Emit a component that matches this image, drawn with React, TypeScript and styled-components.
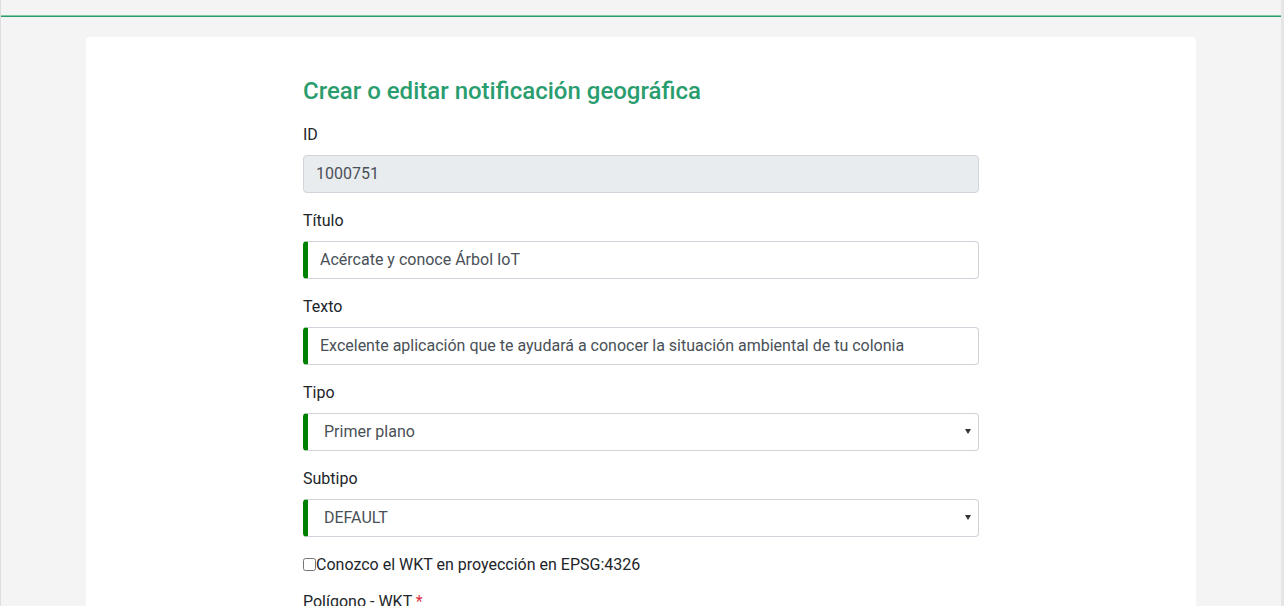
import styled, { createGlobalStyle } from 'styled-components'

const GlobalStyle = createGlobalStyle`
    html, body {
        margin: 0;
        padding: 0;
        overflow: hidden;
        background: #f4f4f4;
    }
    body {
        font-family: Roboto, "Liberation Sans", sans-serif;
        font-size: 16px;
        line-height: 1.5;
        color: #212529;
    }
    * {
        box-sizing: border-box;
    }
`;

const fields = [
    { label: 'ID', value: '1000751', kind: 'disabled' },
    { label: 'Título', value: 'Acércate y conoce Árbol IoT', kind: 'text' },
    { label: 'Texto', value: 'Excelente aplicación que te ayudará a conocer la situación ambiental de tu colonia', kind: 'text' },
    { label: 'Tipo', value: 'Primer plano', kind: 'select' },
    { label: 'Subtipo', value: 'DEFAULT', kind: 'select' },
];

export default function App() {
    return (
        <Page>
            <GlobalStyle />
            <TopBar />
            <Card>
                <Form>
                    <Title>Crear o editar notificación geográfica</Title>
                    {fields.map((f) => (
                        <FormGroup key={f.label}>
                            <Label>{f.label}</Label>
                            {f.kind === 'disabled' && <Input disabled defaultValue={f.value} />}
                            {f.kind === 'text' && <Input $required defaultValue={f.value} />}
                            {f.kind === 'select' && (
                                <SelectWrap>
                                    <Select defaultValue={f.value}>
                                        <option>{f.value}</option>
                                    </Select>
                                </SelectWrap>
                            )}
                        </FormGroup>
                    ))}
                    <CheckRow>
                        <Check type="checkbox" />
                        Conozco el WKT en proyección en EPSG:4326
                    </CheckRow>
                    <Label>
                        Polígono - WKT <Star>*</Star>
                    </Label>
                </Form>
            </Card>
        </Page>
    );
}

const Page = styled.div`
    min-height: 606px;
    border-left: 1px solid #dedede;
    border-right: 3px solid #e6e6e6;
    background: #f4f4f4;
`;

const TopBar = styled.div`
    height: 16px;
    border-bottom: 1px solid #86c7a5;
    box-shadow: 0 1px 0 #2a9d6f;
`;

const Card = styled.div`
    width: 1110px;
    margin: 21px auto 0;
    padding: 40px 0 40px;
    background: #fff;
    border-radius: 4px;
`;

const Form = styled.div`
    width: 676px;
    margin: 0 auto;
`;

const Title = styled.h2`
    margin: 0 0 17px;
    font-size: 24px;
    font-weight: 500;
    line-height: 1.2;
    color: #2a9d6f;
`;

const FormGroup = styled.div`
    margin-bottom: 16px;
`;

const Label = styled.label`
    display: block;
    margin-bottom: 8px;
    font-size: 16px;
    line-height: 24px;
`;

const Input = styled.input<{ $required?: boolean }>`
    display: block;
    width: 100%;
    height: 38px;
    padding: 6px 12px;
    font-family: inherit;
    font-size: 16px;
    line-height: 1.5;
    color: #495057;
    background: #fff;
    border: 1px solid #ced4da;
    border-left: ${(p) => (p.$required ? '5px solid #008000' : '1px solid #ced4da')};
    border-radius: 4px;
    outline: none;

    &:disabled {
        background: #e9ecef;
        color: #495057;
    }
`;

const SelectWrap = styled.div`
    position: relative;

    &::after {
        content: '';
        position: absolute;
        right: 8px;
        top: 16px;
        border-left: 3px solid transparent;
        border-right: 3px solid transparent;
        border-top: 5px solid #333;
        pointer-events: none;
    }
`;

const Select = styled.select`
    display: block;
    width: 100%;
    height: 38px;
    padding: 6px 12px 6px 16px;
    font-family: inherit;
    font-size: 16px;
    color: #495057;
    background: #fff;
    border: 1px solid #ced4da;
    border-left: 5px solid #008000;
    border-radius: 4px;
    appearance: none;
    outline: none;
`;

const CheckRow = styled.label`
    display: flex;
    align-items: center;
    margin-bottom: 13px;
    font-size: 16px;
    line-height: 24px;
`;

const Check = styled.input`
    width: 13px;
    height: 13px;
    margin: 0;
`;

const Star = styled.span`
    color: #dc3545;
`;
